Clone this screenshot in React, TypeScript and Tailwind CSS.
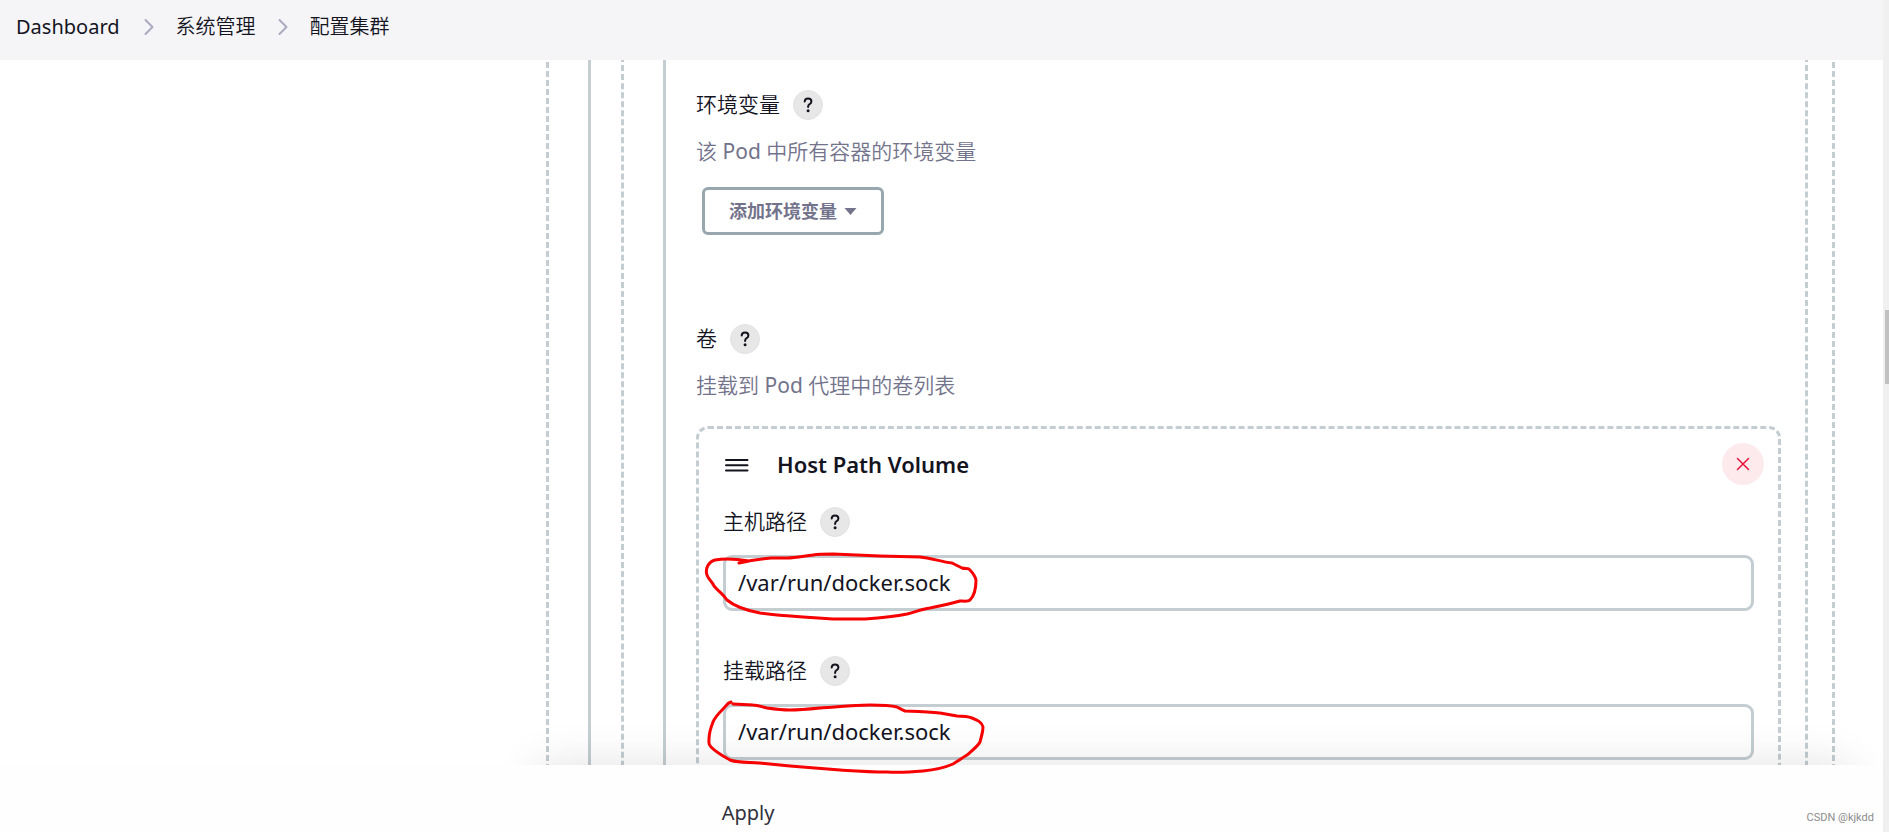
import { useId } from "react";
import type { ReactNode } from "react";

function Chevron() {
  return (
    <svg viewBox="0 0 10 18" className="h-[18px] w-[10px]" fill="none" stroke="#a9a9bf" strokeWidth="2" strokeLinecap="round" strokeLinejoin="round" aria-hidden="true">
      <path d="M1.5 2 8.5 9l-7 7" />
    </svg>
  );
}

function HelpButton({ topic }: { topic: string }) {
  return (
    <button
      type="button"
      aria-label={topic}
      className="flex size-[30px] shrink-0 items-center justify-center rounded-full border border-[#e2e2e3] bg-[#e7e7e8] text-[#14141f]"
    >
      <svg viewBox="0 0 10 16" className="h-4 w-[10px]" fill="none" aria-hidden="true">
        <path d="M1.7 4.5C1.8 2.7 3.1 1.6 5 1.6s3.4 1.1 3.4 2.8c0 1.4-.8 2.1-1.8 2.8C5.500 7.900 5.100 8.400 5.100 9.700v.4" stroke="currentColor" strokeWidth="2" strokeLinecap="round" />
        <circle cx="5.100" cy="13.800" r="1.500" fill="currentColor" />
      </svg>
    </button>
  );
}

function Section({ title, children }: { title: string; children: ReactNode }) {
  return (
    <div>
      <div className="flex h-[30px] items-center gap-[13px]">
        <h2 className="text-[21px] font-[350]">{title}</h2>
        <HelpButton topic={title} />
      </div>
      <p className="mt-4 text-[21px] leading-[30px] font-[350] text-[#73738c]">{children}</p>
    </div>
  );
}

function PathField({ label, value }: { label: string; value: string }) {
  const id = useId();
  return (
    <div>
      <div className="flex h-[30px] items-center gap-[13px]">
        <label htmlFor={id} className="text-[21px] font-[350]">
          {label}
        </label>
        <HelpButton topic={label} />
      </div>
      <input
        id={id}
        type="text"
        defaultValue={value}
        className="mt-[18px] block h-14 w-full rounded-[9px] border-3 border-[#c3cdd2] bg-white px-3 pb-0.5 text-[22px] outline-none"
      />
    </div>
  );
}

export default function App() {
  return (
    <div className="relative flex h-screen overflow-hidden bg-white font-['Noto_Sans','Noto_Sans_CJK_SC',sans-serif] text-[#14141f]">
      <div className="flex min-w-0 flex-1 flex-col">
        <nav className="z-10 flex h-[60px] shrink-0 items-center bg-[#f5f5f8] px-4 pb-1.5 text-[20px]">
          <a href="#dashboard">Dashboard</a>
          <span className="pr-[22px] pl-6"><Chevron /></span>
          <a href="#manage" className="font-[350]">系统管理</a>
          <span className="px-[22px]"><Chevron /></span>
          <a href="#cloud" className="font-[350]">配置集群</a>
        </nav>

        <main className="min-h-0 flex-1 overflow-hidden pr-12 pl-[546px]">
          <div className="-mt-4 border-3 border-dashed border-[#c3cdd2] pr-6 pl-[39px]">
            <div className="border-l-3 border-[#c3cdd2] pl-[30px]">
              <div className="border-x-3 border-dashed border-[#c3cdd2] pr-6 pl-[39px]">
                <div className="border-l-3 border-[#c3cdd2] pt-[43px] pl-[30px]">
                  <Section title="环境变量">
                    该 <span className="font-normal">Pod</span> 中所有容器的环境变量
                  </Section>
                  <button
                    type="button"
                    className="mt-[21px] ml-[6px] flex h-12 items-center gap-[7px] rounded-[6px] border-3 border-[#98a6ad] px-6 text-[18px] font-bold text-[#73738c]"
                  >
                    添加环境变量
                    <svg viewBox="0 0 13 7" className="h-[7px] w-[13px]" fill="currentColor" aria-hidden="true">
                      <path d="M.5 0h12L6.500 7z" />
                    </svg>
                  </button>

                  <div className="mt-[89px]">
                    <Section title="卷">
                      挂载到 <span className="font-normal">Pod</span> 代理中的卷列表
                    </Section>
                  </div>

                  <section className="mt-[26px] rounded-xl border-3 border-dashed border-[#c3cdd2] px-6 pt-[14px] pb-10">
                    <div className="-mr-[10px] flex h-[42px] items-center">
                      <svg viewBox="0 0 28 20" className="h-5 w-7 shrink-0" stroke="#14141f" strokeWidth="2" strokeLinecap="round" aria-hidden="true">
                        <path d="M3 6h21.500M3 11.200h21.500M3 16.500h21.500" />
                      </svg>
                      <h3 className="ml-[26px] flex-1 text-[22px] font-semibold">Host Path Volume</h3>
                      <button type="button" aria-label="Delete" className="flex size-[42px] items-center justify-center rounded-full bg-[#fdeaec]">
                        <svg viewBox="0 0 14 14" className="size-[14px]" fill="none" stroke="#e6143c" strokeWidth="1.500" strokeLinecap="round" aria-hidden="true">
                          <path d="M1.500 1.500l11 11M12.500 1.500l-11 11" />
                        </svg>
                      </button>
                    </div>
                    <div className="mt-[22px] flex flex-col gap-[45px]">
                      <PathField label="主机路径" value="/var/run/docker.sock" />
                      <PathField label="挂载路径" value="/var/run/docker.sock" />
                    </div>
                  </section>
                </div>
              </div>
            </div>
          </div>
        </main>

        <footer className="relative z-10 shrink-0">
          <div className="absolute inset-y-0 right-8 left-[536px] shadow-[0_0_45px_rgba(0,0,0,0.12)]" />
          <div className="relative flex h-[67px] items-center gap-[86px] bg-[#fefefe] pt-7 pl-[592px] text-[20px]">
            <button type="button" className="text-white">Save</button>
            <button type="button" className="text-[#30303c]">Apply</button>
          </div>
        </footer>
      </div>

      <div className="w-[6px] shrink-0 bg-[#f0f0f0] pt-[310px] pl-[2px]">
        <div className="h-[74px] bg-[#c1c1c1]" />
      </div>

      <svg viewBox="700 545 300 235" className="pointer-events-none absolute top-[545px] left-[700px] z-20 h-[235px] w-[300px]" fill="none" stroke="#f70000" strokeWidth="3" strokeLinecap="round" strokeLinejoin="round" aria-hidden="true">
        <path d="M739 563L749 561C737 559 726 558 715 560C708 562 705 569 707 575C708 579 712 581 714 586C719 592 723 594 727 600C733 605 744 610 760 613C774 615 788 616 803 617L833 619H865C880 618 893 617 907 614C915 612 922 609 930 608C940 606 950 604 960 601C963 601 968 602 970 600C974 596 976 588 976 580C975 575 972 572 969 569C967 568 965 569 962 568L952 563C942 562 931 558 920 557L880 556L833 554C826 554 819 554 813 555C804 556 796 558 787 558H771C760 559 750 560 739 563Z" />
        <path d="M731 702C727 703 726 706 723 709C719 713 715 717 713 722C711 727 709 733 709 739C709 743 708 744 711 747C717 753 723 756 730 760C737 763 750 762 760 763L790 766L840 770C856 771 871 772 887 772C900 773 912 772 923 771C934 770 944 768 953 764C958 761 962 758 967 755C974 749 978 746 980 742C981 737 983 733 983 727C982 722 977 720 972 718C967 716 962 716 957 716L940 713C928 712 917 711 905 711C902 710 899 708 897 707C889 705 880 705 870 705C853 705 837 707 820 708C810 709 800 710 790 710C782 710 774 709 767 708C762 707 758 705 753 705L733 704" />
      </svg>

      <p className="absolute right-[15px] bottom-[6px] z-20 font-[Roboto,sans-serif] text-[11px] leading-4 text-[#8c8c8c]">CSDN @kjkdd</p>
    </div>
  );
}
